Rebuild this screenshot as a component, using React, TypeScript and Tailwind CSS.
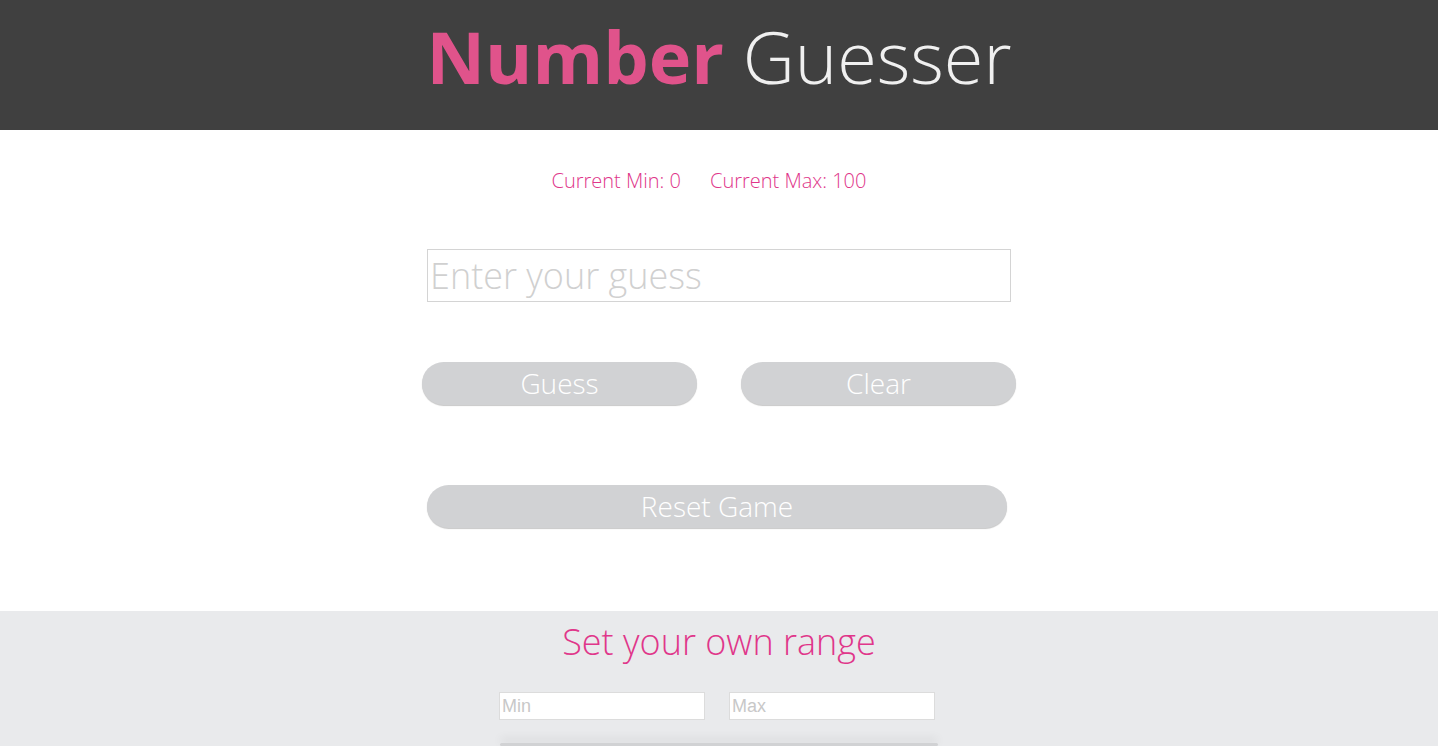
import React from "react";

export default function App() {
  const font = { fontFamily: '"Open Sans", "Noto Sans", sans-serif' };
  return (
    <div className="w-[1438px] h-[746px] overflow-hidden bg-white" style={font}>
      <header className="h-[130px] bg-[#404040] flex items-center justify-center">
        <h1 className="text-[72px] leading-none pb-[18px] tracking-[0px]">
          <span className="font-bold text-[#e0538b]">Number</span>{" "}
          <span className="font-light text-[#f0f0f0]">Guesser</span>
        </h1>
      </header>
      <main className="h-[481px] flex flex-col items-center">
        <div className="mt-[37px] -ml-[20px] flex gap-[29px] text-[20px] font-light text-[#e0368a] leading-[28px]">
          <span>Current Min: 0</span>
          <span>Current Max: 100</span>
        </div>
        <input
          className="mt-[54px] w-[584px] h-[53px] border border-[#d4d4d4] px-[2px] text-[36px] font-light text-[#555] placeholder:text-[#d0d0d0] outline-none"
          placeholder="Enter your guess"
        />
        <div className="mt-[60px] flex gap-[44px]">
          <button className="w-[275px] h-[43px] rounded-full bg-[#d1d2d4] text-white text-[28px] font-light leading-none pb-[2px] shadow-[0_1px_1px_rgba(0,0,0,0.22)]">
            Guess
          </button>
          <button className="w-[275px] h-[43px] rounded-full bg-[#d1d2d4] text-white text-[28px] font-light leading-none pb-[2px] shadow-[0_1px_1px_rgba(0,0,0,0.22)]">
            Clear
          </button>
        </div>
        <button className="mt-[80px] w-[580px] h-[43px] rounded-full bg-[#d1d2d4] text-white text-[28px] font-light leading-none pb-[2px] shadow-[0_1px_1px_rgba(0,0,0,0.22)] -ml-[4px]">
          Reset Game
        </button>
      </main>
      <section className="h-[135px] bg-[#e9eaec] flex flex-col items-center">
        <h2 className="mt-[6px] text-[36px] font-light text-[#e0368a] leading-[50px]">Set your own range</h2>
        <div className="mt-[25px] flex gap-[24px] -ml-[4px]">
          <input
            className="w-[206px] h-[28px] bg-white border border-[#dcdcdc] px-[2px] text-[18px] placeholder:text-[#c8c8c8] outline-none"
            style={{ fontFamily: '"Liberation Sans", Arial, sans-serif' }}
            placeholder="Min"
          />
          <input
            className="w-[206px] h-[28px] bg-white border border-[#dcdcdc] px-[2px] text-[18px] placeholder:text-[#c8c8c8] outline-none"
            style={{ fontFamily: '"Liberation Sans", Arial, sans-serif' }}
            placeholder="Max"
          />
        </div>
        <div className="mt-[23px] w-[438px] h-[43px] rounded-full bg-[#d1d2d4] shadow-[0_-4px_10px_rgba(0,0,0,0.12)]" />
      </section>
    </div>
  );
}
